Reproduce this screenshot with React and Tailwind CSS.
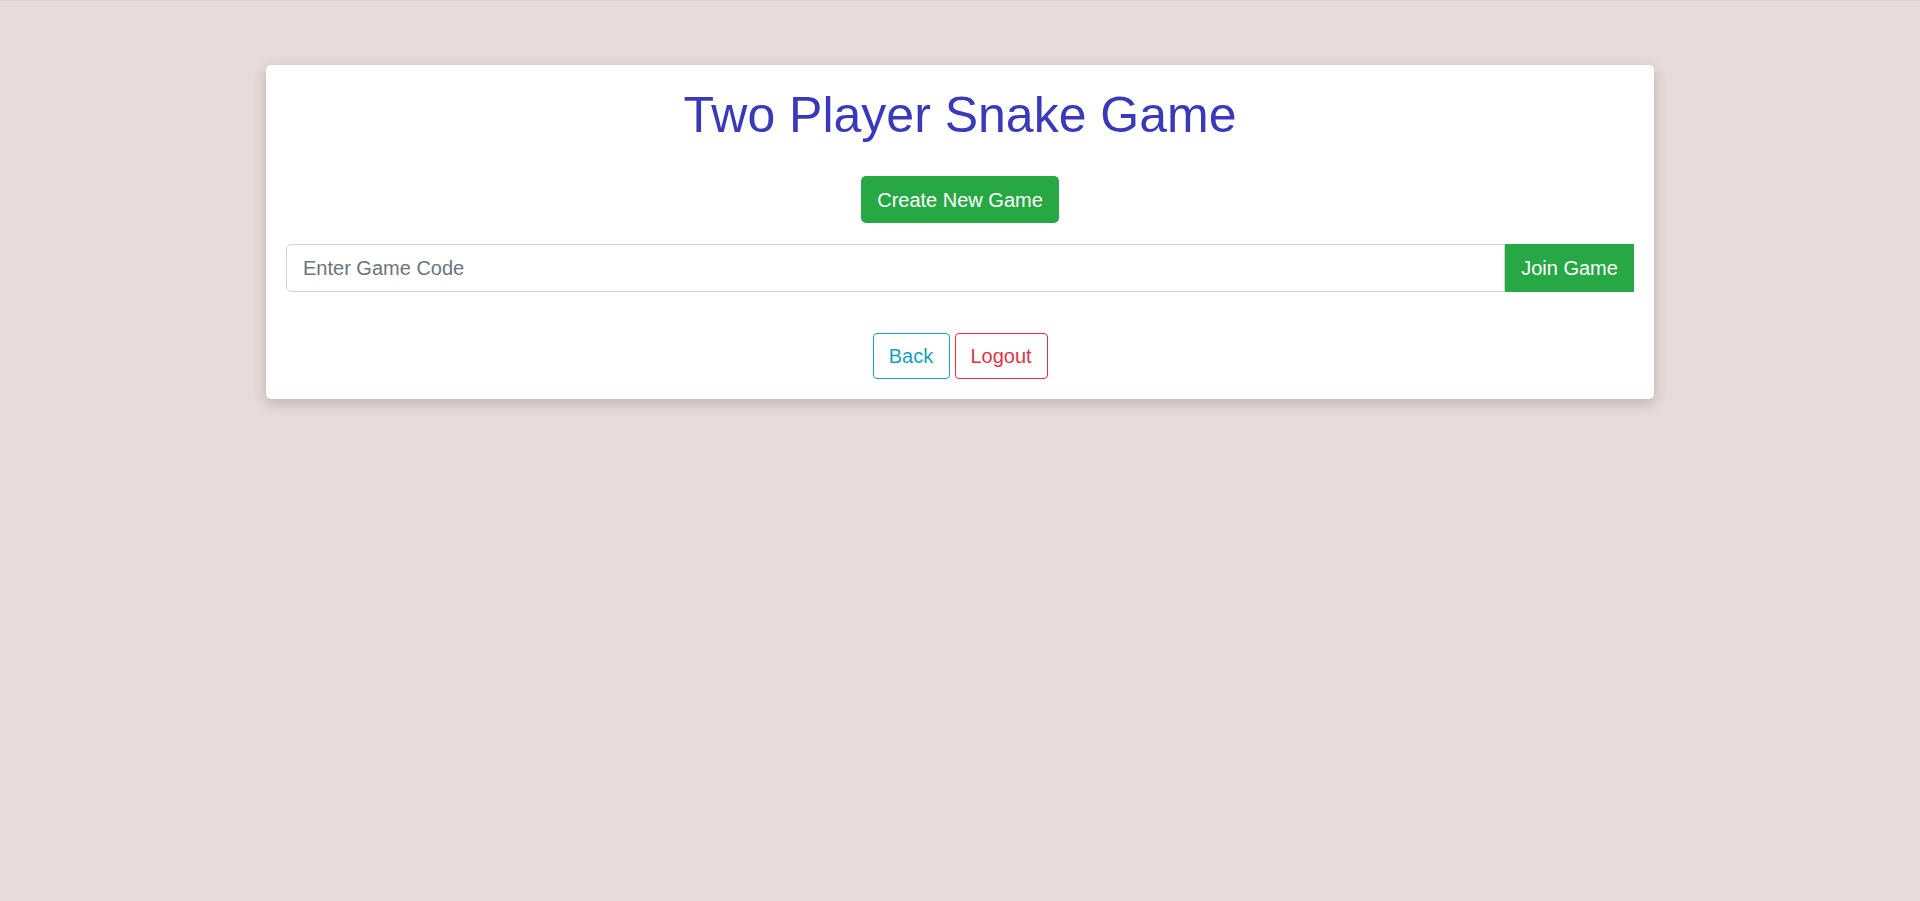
export default function App() {
  return (
    <div className="min-h-screen bg-[#e7dbdc] border-t border-[#d6d6dc] pt-[64px] font-['Liberation_Sans',Arial,sans-serif]">
      <div className="w-[1388px] mx-auto bg-white rounded-[5px] shadow-[0_4px_14px_rgba(90,60,60,0.28)] p-5">
        <h1 className="text-center text-[50px] leading-[60px] text-[#3a3ab9]">Two Player Snake Game</h1>

        <div className="flex justify-center mt-[31px]">
          <button className="h-[47px] px-4 text-[20px] text-white bg-[#28a745] rounded-[5px]">
            Create New Game
          </button>
        </div>

        <div className="flex mt-[21px] h-[48px]">
          <input
            type="text"
            placeholder="Enter Game Code"
            className="flex-1 min-w-0 px-4 text-[20px] text-[#495057] placeholder:text-[#6c757d] border border-[#ced4da] rounded-l-[5px] outline-none"
          />
          <button className="w-[129px] text-[20px] text-white bg-[#28a745]">Join Game</button>
        </div>

        <div className="flex justify-center gap-[5px] mt-[41px]">
          <button className="h-[46px] w-[77px] text-[20px] text-[#17a2b8] border border-[#17a2b8] rounded-[4px]">
            Back
          </button>
          <button className="h-[46px] w-[93px] text-[20px] text-[#dc3545] border border-[#dc3545] rounded-[4px]">
            Logout
          </button>
        </div>
      </div>
    </div>
  );
}
